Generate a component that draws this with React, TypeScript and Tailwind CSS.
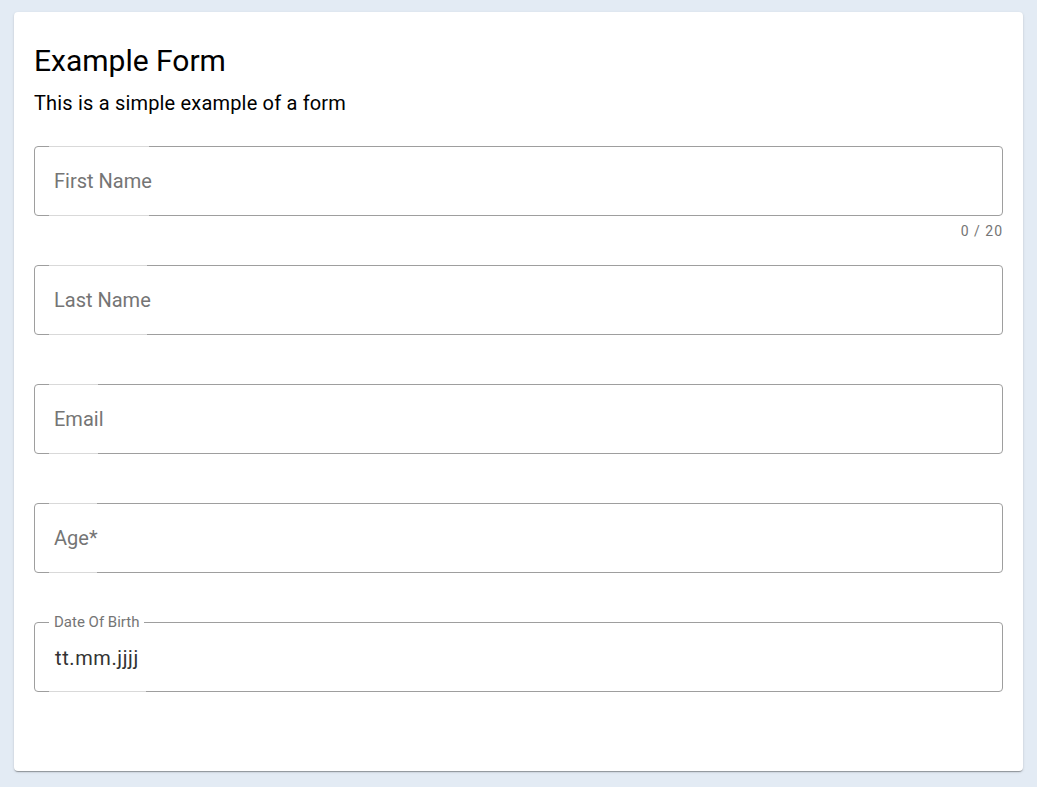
import React from "react";

const font = { fontFamily: "Roboto, 'Noto Sans', sans-serif" };

function Field({ label, notch, counter }: { label: string; notch: number; counter?: string }) {
  return (
    <div className="flex flex-col">
      <div className="relative h-[70px] rounded-[4px] border border-[#9e9e9e] flex items-center pl-[19px]">
        <span
          className="absolute left-[14px] top-[-1px] h-px bg-[#d9d9d9]"
          style={{ width: notch }}
        />
        <span
          className="absolute left-[14px] bottom-[-1px] h-px bg-[#d9d9d9]"
          style={{ width: notch }}
        />
        <span className="text-[20px] text-[#757575] leading-[24px]">{label}</span>
      </div>
      <div className="h-[49px] flex justify-end items-start pt-[6px]">
        {counter && (
          <span className="text-[14px] leading-[18px] text-[#757575] tracking-[0.07em]">{counter}</span>
        )}
      </div>
    </div>
  );
}

export default function App() {
  return (
    <div className="min-h-screen bg-[#e3ebf4] pt-[12px] px-[14px] pb-[16px]" style={font}>
      <div className="h-[759px] bg-white rounded-[4px] shadow-[0_2px_1px_-1px_rgba(0,0,0,0.2),0_1px_1px_0_rgba(0,0,0,0.14),0_1px_3px_0_rgba(0,0,0,0.12)] px-[20px] pt-[31px]">
        <h1 className="text-[30px] leading-[36px] text-black">Example Form</h1>
        <p className="mt-[10px] text-[20px] leading-[28px] text-black tracking-[0.18px]">This is a simple example of a form</p>
        <div className="mt-[29px] flex flex-col">
          <Field label="First Name" notch={100} counter="0 / 20" />
          <Field label="Last Name" notch={98} />
          <Field label="Email" notch={49} />
          <Field label="Age*" notch={48} />
          <div className="relative h-[70px] rounded-[4px] border border-[#9e9e9e] flex items-center pl-[20px] pt-[2px]">
            <span className="absolute left-[14px] top-[-10px] bg-white px-[5px] text-[15px] leading-[18px] text-[#757575]">
              Date Of Birth
            </span>
            <span className="absolute left-[14px] bottom-[-1px] h-px w-[97px] bg-[#d9d9d9]" />
            <span className="text-[20px] leading-[24px] text-[#333333] tracking-[0.6px]">tt.mm.jjjj</span>
          </div>
        </div>
      </div>
    </div>
  );
}
